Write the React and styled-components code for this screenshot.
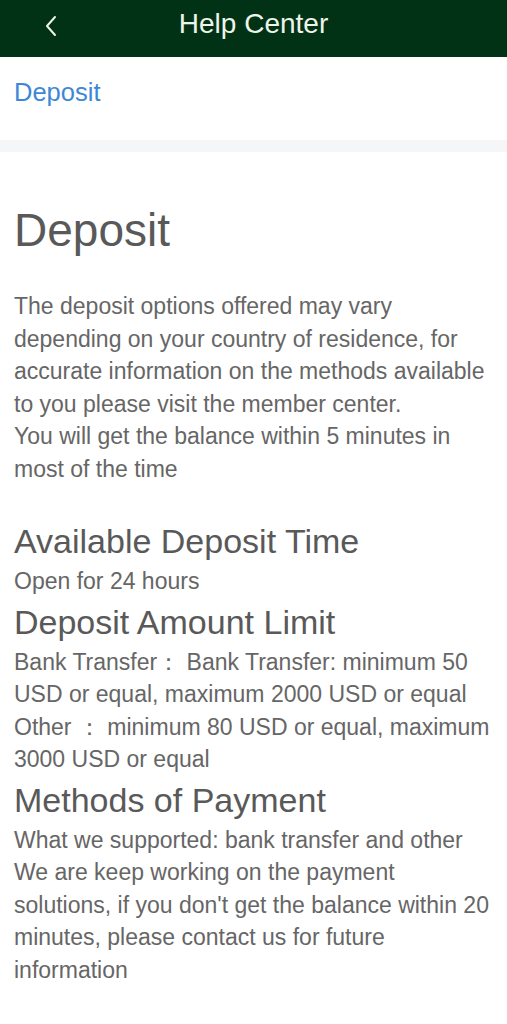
import React from 'react';
import styled, { createGlobalStyle } from 'styled-components';

const GlobalStyle = createGlobalStyle`
  * {
    box-sizing: border-box;
  }
  body {
    margin: 0;
    background: #ffffff;
    font-family: "Liberation Sans", Arial, sans-serif;
  }
`;

const Page = styled.div`
  width: 507px;
  min-height: 1024px;
  background: #ffffff;
`;

const TopBar = styled.header`
  height: 57px;
  background: #013216;
  display: grid;
  grid-template-columns: 80px 1fr 80px;
  align-items: center;
`;

const BackButton = styled.button`
  background: none;
  border: 0;
  padding: 0 0 6px 44px;
  height: 100%;
  display: flex;
  align-items: center;
  cursor: pointer;
`;

const Title = styled.h1`
  margin: 0 0 10px;
  text-align: center;
  font-size: 28px;
  font-weight: 400;
  color: #eef4ea;
`;

const TabBar = styled.nav`
  height: 95px;
  padding: 0 14px 13px;
  display: flex;
  align-items: center;
  border-bottom: 12px solid #f5f6f8;
`;

const Tab = styled.span`
  font-size: 25.5px;
  color: #3d88d6;
`;

const Content = styled.main`
  padding: 53px 13px 40px 14px;
  color: #666666;
`;

const PageHeading = styled.h2`
  margin: 0 0 35px;
  font-size: 46px;
  line-height: 50px;
  font-weight: 400;
  color: #595959;
`;

const Heading = styled.h3`
  margin: ${p => (p.$first ? '36px' : '4px')} 0 4px;
  font-size: 34px;
  line-height: 40px;
  font-weight: 400;
  color: #595959;
`;

const Para = styled.p`
  margin: 0;
  font-size: 23px;
  line-height: 32.5px;
`;

const Chevron = () => (
  <svg width="14" height="22" viewBox="0 0 14 22" fill="none">
    <polyline points="11,2 3,11 11,20" stroke="#eef4ea" strokeWidth="2" strokeLinecap="round" strokeLinejoin="round" />
  </svg>
);

const App = () => (
  <Page>
    <GlobalStyle />
    <TopBar>
      <BackButton aria-label="back">
        <Chevron />
      </BackButton>
      <Title>Help Center</Title>
      <span />
    </TopBar>
    <TabBar>
      <Tab>Deposit</Tab>
    </TabBar>
    <Content>
      <PageHeading>Deposit</PageHeading>
      <Para>
        The deposit options offered may vary depending on your country of residence, for accurate
        information on the methods available to you please visit the member center.
        <br />
        You will get the balance within 5 minutes in most of the time
      </Para>
      <Heading $first>Available Deposit Time</Heading>
      <Para>Open for 24 hours</Para>
      <Heading>Deposit Amount Limit</Heading>
      <Para>
        Bank Transfer：&nbsp;Bank Transfer: minimum 50 USD or equal, maximum 2000 USD or equal
        <br />
        Other ：&nbsp;minimum 80 USD or equal, maximum 3000 USD or equal
      </Para>
      <Heading>Methods of Payment</Heading>
      <Para>
        What we supported: bank transfer and other
        <br />
        We are keep working on the payment solutions, if you don't get the balance within 20
        minutes, please contact us for future information
      </Para>
    </Content>
  </Page>
);

export default App;
